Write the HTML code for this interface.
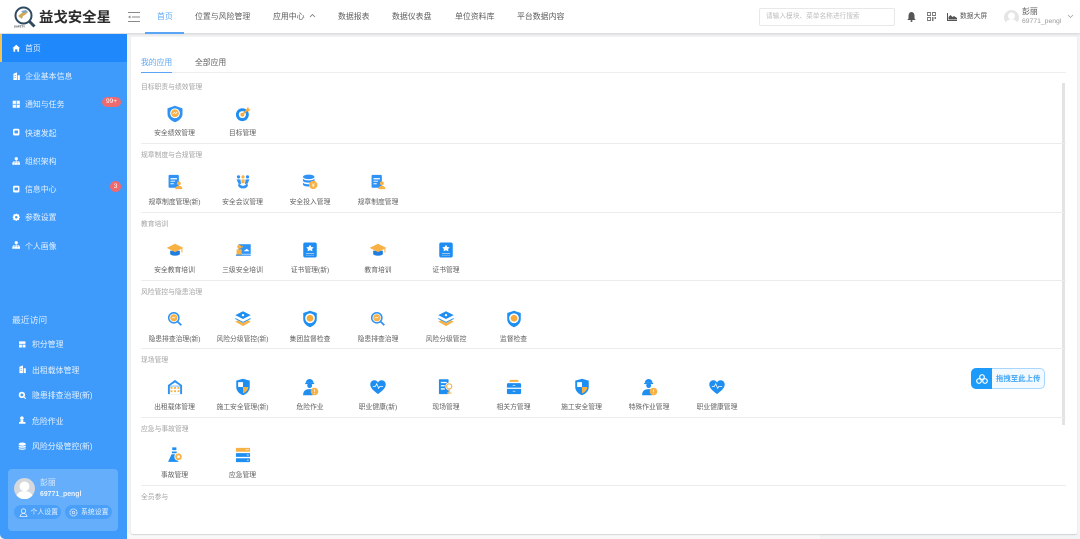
<!DOCTYPE html>
<html lang="zh"><head><meta charset="utf-8"><title>益戈安全星</title>
<style>
*{box-sizing:border-box}
html,body{margin:0;padding:0;width:1080px;height:539px;overflow:hidden;background:#f1f3f5}
body{position:relative;font-family:"Liberation Sans","Noto Sans CJK SC",sans-serif;color:#555}
#wrap{position:absolute;left:0;top:0;width:1080px;height:539px;overflow:hidden;filter:blur(.35px)}
.t{position:absolute;white-space:nowrap;line-height:12px;height:12px}
.a{position:absolute}
#hd{position:absolute;left:0;top:0;width:1080px;height:33px;background:#fff;box-shadow:0 1px 3px rgba(0,0,0,.14)}
.n{font-size:7.9px;color:#5c5c5c;top:10.5px}
#sb{position:absolute;left:0;top:34px;width:127px;height:505px;background:#3f9bfb;border-bottom-left-radius:5px;color:#fff}
.s{font-size:7.9px;color:#e6f2ff;left:25px;margin-top:1px}
.r{font-size:7.9px;color:#e6f2ff;left:32px;margin-top:1px}
#card{position:absolute;left:131px;top:37px;width:946px;height:497px;background:#fff;border-radius:2px;box-shadow:0 1px 1px rgba(0,0,0,.14)}
.h{font-size:6.8px;color:#a3a3a3;left:141px;margin-top:1px}
.l{font-size:6.8px;color:#5f5f5f;transform:translateX(-50%);margin-top:1px}
.d{position:absolute;left:141px;width:925px;height:1px;background:#ececec}
.i{position:absolute;width:18px;height:18px}
.w{position:absolute;width:8.500px;height:8.500px;margin:.75px}
</style></head><body>
<svg width="0" height="0" style="position:absolute">
<defs>
<symbol id="shield" viewBox="0 0 24 24"><path d="M12 1 22 4.500V12C22 18 16 21.500 12 23 8 21.500 2 18 2 12V4.500Z" fill="#2f93f5"/><circle cx="12" cy="11" r="6.500" fill="#fff"/><circle cx="12" cy="11" r="5.200" fill="#f8b144"/><path d="M9 12l2-2 2 1.500 2-2.500" stroke="#fff" fill="none"/></symbol>
<symbol id="target" viewBox="-2 -2 28 28"><circle cx="11" cy="13" r="10" fill="#1f8ef1"/><circle cx="11" cy="13" r="5.500" fill="#fff"/><circle cx="11" cy="13" r="3" fill="#f8a93a"/><path d="M11 13 20 4" stroke="#f8a93a" stroke-width="2.500"/><path d="M18 2h3v3h3l-3 3h-3z" fill="#f8a93a"/></symbol>
<symbol id="docu" viewBox="-2 -2 28 28"><rect x="2" y="1" width="16" height="20" rx="1.500" fill="#2f93f5"/><path d="M5 6h10v2H5zM5 10h7v1.500H5zM5 14h5v1.500H5z" fill="#fff"/><circle cx="18" cy="14" r="3" fill="#f8b144"/><path d="M12.500 23c0-3.500 2.500-5 5.500-5s5.500 1.500 5.500 5z" fill="#f8b144"/></symbol>
<symbol id="meet" viewBox="-2 -2 28 28"><circle cx="5" cy="4" r="2.500" fill="#2f93f5"/><circle cx="12" cy="4" r="2.500" fill="#f8b144"/><circle cx="19" cy="4" r="2.500" fill="#2f93f5"/><path d="M2 8h6l1 7H5zM22 8h-6l-1 7h4z" fill="#2f93f5"/><path d="M9.500 8h5v6h-5z" fill="#f8b144"/><path d="M4 16c1 5 5 6 8 6s7-1 8-6l-3-1c-1 2-3 3-5 3s-4-1-5-3z" fill="#2f93f5"/></symbol>
<symbol id="db" viewBox="-2 -2 28 28"><ellipse cx="10" cy="4" rx="9" ry="3.500" fill="#2f93f5"/><path d="M1 6.500c1 2 4 3 9 3s8-1 9-3v3.500c-1 2-4 3-9 3s-8-1-9-3zM1 12.500c1 2 4 3 9 3h1v3.500h-1c-5 0-8-1-9-3z" fill="#2f93f5"/><circle cx="17" cy="16.500" r="6.500" fill="#f8b144"/><path d="M15 14.500l2 2 2-2M17 16.500v4M15 18h4" stroke="#fff" fill="none"/></symbol>
<symbol id="cap" viewBox="-1 -1 26 26"><path d="M5 13v5c2 3 12 3 14 0v-5z" fill="#1f7fe0"/><path d="M12 3 24 9 12 15 0 9z" fill="#f8b144"/><path d="M22 9.500v6" stroke="#f8b144" stroke-width="1.500"/></symbol>
<symbol id="board" viewBox="-2 -2 28 28"><rect x="5" y="3" width="19" height="15" fill="#2f93f5"/><path d="M13 14 18 10 22 14z" fill="#fff"/><circle cx="6" cy="7" r="3" fill="#f8b144"/><path d="M2 11h8v10H2z" fill="#f8b144"/><path d="M8 9l4-3" stroke="#f8b144" stroke-width="1.500"/><rect x="1" y="19" width="23" height="2" fill="#2f93f5"/></symbol>
<symbol id="cert" viewBox="0 0 24 24"><rect x="3" y="2" width="18" height="20" rx="2.500" fill="#1d8df3"/><path d="M12 5l1.800 3 3.200.5-2.200 2.200.4 3-3.200-1.300-3.200 1.300.4-3L7 8.500l3.200-.5z" fill="#fff"/><rect x="6.500" y="16" width="11" height="1.300" fill="#9dc8ee"/><rect x="6.500" y="18.500" width="11" height="1.300" fill="#6fb0e8"/></symbol>
<symbol id="look" viewBox="-3 -3 30 30"><circle cx="10" cy="10" r="8.500" fill="none" stroke="#2f93f5" stroke-width="2.500"/><circle cx="10" cy="10" r="6" fill="#f8b144"/><path d="M6.500 11l2-2 2 1.500 2.500-2.500" stroke="#fff" fill="none"/><path d="M16 16 22.500 22.500" stroke="#2f93f5" stroke-width="3"/></symbol>
<symbol id="layers" viewBox="-2 -2 28 28"><path d="M12 0 24 6 12 12 0 6z" fill="#1f8ef1"/><path d="M0 10.500 12 16.500 24 10.500 24 12 12 18 0 12z" fill="#1f8ef1"/><path d="M0 16 4 14 12 18.500 20 14 24 16 12 23z" fill="#f8b144"/><circle cx="12" cy="6" r="1.800" fill="#fff"/></symbol>
<symbol id="guard" viewBox="0 0 24 24"><path d="M12 1 21 4V12C21 18 16 21.500 12 23 8 21.500 3 18 3 12V4Z" fill="#1f8ef1"/><circle cx="12" cy="11" r="6.500" fill="#fff"/><circle cx="12" cy="11" r="4.500" fill="#f8a93a"/></symbol>
<symbol id="house" viewBox="-2 -2 28 28"><path d="M1 9 12 1 23 9V23H1z" fill="#2f93f5"/><path d="M4 10 12 5 20 10z" fill="#fff"/><rect x="4" y="11" width="16" height="12" fill="#fff"/><path d="M5 12h3v3H5zM10.500 12h3v3h-3zM16 12h3v3h-3zM5 17h3v3H5zM10.500 17h3v3h-3zM16 17h3v3h-3z" fill="#f8b144"/></symbol>
<symbol id="sh2" viewBox="0 0 24 24"><path d="M12 1 21 3.500V12C21 18 16 21.500 12 23 8 21.500 3 18 3 12V3.500Z" fill="#1f8ef1"/><path d="M5.500 5.500H12V12H5.500z" fill="#fff"/><path d="M12 12h7c0 4-3 7-7 8.500z" fill="#f8b144"/></symbol>
<symbol id="work" viewBox="-1 -1 26 26"><path d="M6 6a5.500 5.500 0 0 1 11 0z" fill="#1f8ef1"/><rect x="5" y="6" width="13" height="1.800" fill="#1f8ef1"/><circle cx="11.500" cy="10" r="3.500" fill="#1f8ef1"/><path d="M2 24c0-6 3-9 9.500-9 2 0 3.500 .3 4.500 1v8z" fill="#1f8ef1"/><circle cx="18.500" cy="18.500" r="5.500" fill="#f8b144"/><path d="M18.500 15.500v3.500M18.500 20.500v1.200" stroke="#fff"/></symbol>
<symbol id="heart" viewBox="-2 -2 28 28"><path d="M12 23C5 18 0 13.500 0 8 0 4 3 1.500 6.500 1.500 9 1.500 11 3 12 5 13 3 15 1.500 17.500 1.500 21 1.500 24 4 24 8 24 13.500 19 18 12 23Z" fill="#1f8ef1"/><path d="M4 11h4l2-4 3 7 2-3h5" stroke="#fff" fill="none" stroke-width="1.200"/></symbol>
<symbol id="dpin" viewBox="-2 -2 28 28"><rect x="1" y="0" width="15" height="23" rx="1" fill="#1f8ef1"/><path d="M4 4h9v2H4zM4 9h6v2H4zM4 14h6v2H4z" fill="#fff"/><circle cx="17" cy="11" r="6" fill="#fff"/><circle cx="17" cy="11" r="4" fill="none" stroke="#f8b144" stroke-width="1.800"/><path d="M17 15v5M13.500 21.500h7" stroke="#f8b144" stroke-width="1.800"/></symbol>
<symbol id="box" viewBox="-2 -2 28 28"><path d="M5 3a2 2 0 0 1 2-2h10a2 2 0 0 1 2 2v1H5z" fill="#f8b144"/><path d="M1 8a2 2 0 0 1 2-2h18a2 2 0 0 1 2 2v5H1zM1 15h22v6a2 2 0 0 1-2 2H3a2 2 0 0 1-2-2z" fill="#1f8ef1"/><path d="M10 9.500h4M10 18.500h4" stroke="#fff"/></symbol>
<symbol id="cone" viewBox="-1 -1 26 26"><path d="M8 1h6v4H8zM7.500 7h7v2.500h-7zM7 11 h7l3 11H2z" fill="#1f8ef1"/><circle cx="17" cy="14.500" r="6" fill="#fff"/><circle cx="17" cy="14.500" r="4.800" fill="#f8b144"/><circle cx="17" cy="14.500" r="2" fill="#fff"/></symbol>
<symbol id="srv" viewBox="-2 -2 28 28"><rect x="1" y="1" width="22" height="6" rx="1" fill="#f8b144"/><rect x="1" y="9" width="22" height="6" rx="1" fill="#1f8ef1"/><rect x="1" y="17" width="22" height="6" rx="1" fill="#1f8ef1"/><path d="M16 4h5M18 12h3M18 20h3" stroke="#fff"/></symbol>
<symbol id="wcard" viewBox="0 0 24 24"><path d="M3 4h18v7H3zM3 13h8v8H3zM13 13h8v8h-8z" fill="#fff"/></symbol>
<symbol id="whome" viewBox="0 0 24 24"><path d="M12 2 23 12h-3v10h-5v-7H9v7H4V12H1z" fill="#fff"/></symbol>
<symbol id="wbld" viewBox="0 0 24 24"><path d="M4 5 14 1V23H4zM16 9h6V23H16z" fill="#fff"/><path d="M7 9h4v2H7zM7 14h4v2H7z" fill="#3f9bfb"/></symbol>
<symbol id="wmsg" viewBox="0 0 24 24"><rect x="3" y="2" width="18" height="19" rx="4" fill="#fff"/><rect x="7" y="7" width="10" height="8" rx="1" fill="#3f9bfb"/></symbol>
<symbol id="wgear" viewBox="0 0 24 24"><path d="M12 1l3 3h5v5l3 3-3 3v5h-5l-3 3-3-3H4v-5l-3-3 3-3V4h5z" fill="#fff"/><circle cx="12" cy="12" r="3.500" fill="#3f9bfb"/></symbol>
<symbol id="wtree" viewBox="0 0 24 24"><circle cx="12" cy="5" r="4.500" fill="#fff"/><rect x="1" y="15" width="7" height="7" fill="#fff"/><rect x="8.500" y="15" width="7" height="7" fill="#fff"/><rect x="16" y="15" width="7" height="7" fill="#fff"/><path d="M4.500 15v-3h15v3M12 9v6" stroke="#fff" fill="none" stroke-width="1.500"/></symbol>
<symbol id="wtabl" viewBox="0 0 24 24"><path d="M2 2h20v20H2z" fill="#fff"/><path d="M2 12h20M12 2v20" stroke="#3f9bfb" stroke-width="2"/></symbol>
<symbol id="wdisc" viewBox="0 0 24 24"><circle cx="11" cy="11" r="9" fill="#fff"/><circle cx="11" cy="11" r="4" fill="#3f9bfb"/><path d="M17 17l5 5" stroke="#fff" stroke-width="3"/></symbol>
<symbol id="wstk" viewBox="0 0 24 24"><ellipse cx="12" cy="6" rx="10" ry="4.500" fill="#fff"/><path d="M2 10c2 3 18 3 20 0v4c-2 3-18 3-20 0zM2 16.500c2 3 18 3 20 0V19c-2 4-18 4-20 0z" fill="#fff"/></symbol>
<symbol id="wper" viewBox="0 0 24 24"><circle cx="11" cy="6" r="5" fill="#fff"/><path d="M7 11h8v6h6v5H3v-5h4z" fill="#fff"/></symbol>
</defs>
</svg>
<div id="wrap">
<div id="hd"></div>
<svg class="a" style="left:13px;top:6px" width="23" height="23" viewBox="0 0 23 23"><circle cx="10.500" cy="9.500" r="8" fill="#fff" stroke="#2f4a60" stroke-width="2"/><path d="M5 10l5-4 5 0-3 3-2 1-1 3z" fill="#cfa95a"/><path d="M8 5l5-1 2 2-5 1z" fill="#7fa6c4"/><path d="M16 15 21.500 20.500" stroke="#2f4a60" stroke-width="3"/><text x="1" y="21.500" font-size="2.800" font-weight="700" fill="#333">SAFETY</text></svg>
<div class="t" style="left:39px;top:8.500px;height:18px;line-height:18px;font-size:14.400px;font-weight:700;color:#2c2c2c">益戈安全星</div>
<svg class="a" style="left:128px;top:12px" width="12" height="10" viewBox="0 0 12 10"><path d="M0 .500h12M4 5h8M0 9.500h12" stroke="#8a8a8a" stroke-width=".9"/><path d="M2.500 3.500 0 5l2.500 1.500z" fill="#8a8a8a"/></svg>
<div class="t n" style="left:157px;color:#5aa6f6">首页</div>
<div class="a" style="left:145px;top:32px;width:39px;height:1.500px;background:#5aa6f6"></div>
<div class="t n" style="left:195px">位置与风险管理</div>
<div class="t n" style="left:273px">应用中心</div>
<svg class="a" style="left:309px;top:13px" width="7" height="5" viewBox="0 0 7 5"><path d="M1 4 3.500 1.500 6 4" fill="none" stroke="#777" stroke-width=".8"/></svg>
<div class="t n" style="left:338px">数据报表</div>
<div class="t n" style="left:392px">数据仪表盘</div>
<div class="t n" style="left:455px">单位资料库</div>
<div class="t n" style="left:517px">平台数据内容</div>
<div class="a" style="left:759px;top:8px;width:136px;height:18px;border:1px solid #e8e8e8;border-radius:2px;background:#fff"></div>
<div class="t" style="left:766px;top:10.500px;font-size:6.700px;color:#bdbdbd">请输入模块、菜单名称进行搜索</div>
<svg class="a" style="left:907px;top:12px" width="9" height="10" viewBox="0 0 9 10"><path d="M4.500 0C2.500 0 1.500 2 1.500 4V6.500L.3 8H8.700L7.500 6.500V4C7.500 2 6.500 0 4.500 0Z" fill="#555"/><circle cx="4.500" cy="9" r="1" fill="#555"/></svg>
<svg class="a" style="left:927px;top:12px" width="9" height="9" viewBox="0 0 9 9"><path d="M.5.500h3v3h-3zM5.500.500h3v3h-3zM.5 5.500h3v3h-3z" fill="none" stroke="#777" stroke-width=".9"/><path d="M5 5h1.500v4H5zM7.500 5H9v2H7.500z" fill="#777"/></svg>
<svg class="a" style="left:947px;top:13px" width="10" height="8" viewBox="0 0 10 8"><path d="M0 0v8h10V7H1V0z" fill="#555"/><path d="M1.500 6.500V4L3.500 2l2 2 1.500-1 3 2v1.500z" fill="#555"/></svg>
<div class="t" style="left:960px;top:10.500px;font-size:6.800px;color:#555">数据大屏</div>
<svg class="a" style="left:1004px;top:10px" width="15" height="15" viewBox="0 0 15 15"><circle cx="7.500" cy="7.500" r="7.500" fill="#e5e5e5"/><circle cx="7.500" cy="6" r="3.500" fill="#fff"/><path d="M1.800 12.500C3 10 5 9.500 7.500 9.500s4.500.5 5.700 3a7.500 7.500 0 0 1-11.400 0z" fill="#fff"/></svg>
<div class="t" style="left:1022px;top:6px;font-size:7.900px;color:#555">彭丽</div>
<div class="t" style="left:1022px;top:16px;font-size:6.800px;color:#9a9a9a">69771_pengl</div>
<svg class="a" style="left:1067px;top:14px" width="7" height="5" viewBox="0 0 7 5"><path d="M1 1 3.500 3.500 6 1" fill="none" stroke="#999" stroke-width=".7"/></svg>

<div id="sb"></div>
<div class="a" style="left:0;top:34px;width:127px;height:28px;background:#1f88fb"></div>
<div class="a" style="left:0;top:34px;width:1.500px;height:28px;background:#f4c452"></div>
<svg class="w" style="left:11px;top:43px"><use href="#whome"/></svg><div class="t s" style="top:42px">首页</div>
<svg class="w" style="left:11px;top:71px"><use href="#wbld"/></svg><div class="t s" style="top:70px">企业基本信息</div>
<svg class="w" style="left:11px;top:99px"><use href="#wtabl"/></svg><div class="t s" style="top:98px">通知与任务</div>
<div class="t" style="left:102px;top:96.500px;width:19px;height:10px;line-height:10px;border-radius:5px;background:#ee6a6e;color:#fff;font-size:6.500px;text-align:center">99+</div>
<svg class="w" style="left:11px;top:127.500px"><use href="#wmsg"/></svg><div class="t s" style="top:126.500px">快速发起</div>
<svg class="w" style="left:11px;top:156px"><use href="#wtree"/></svg><div class="t s" style="top:155px">组织架构</div>
<svg class="w" style="left:11px;top:184px"><use href="#wmsg"/></svg><div class="t s" style="top:183px">信息中心</div>
<div class="t" style="left:110px;top:181px;width:11px;height:11px;line-height:11px;border-radius:50%;background:#ee6a6e;color:#fff;font-size:6.500px;text-align:center">3</div>
<svg class="w" style="left:11px;top:212px"><use href="#wgear"/></svg><div class="t s" style="top:211px">参数设置</div>
<svg class="w" style="left:11px;top:240.500px"><use href="#wtree"/></svg><div class="t s" style="top:239.500px">个人画像</div>
<div class="t" style="left:12px;top:313.500px;font-size:8.800px;color:#dcecff">最近访问</div>
<svg class="w" style="left:17px;top:339px"><use href="#wcard"/></svg><div class="t r" style="top:338px">积分管理</div>
<svg class="w" style="left:17px;top:364.500px"><use href="#wbld"/></svg><div class="t r" style="top:363.500px">出租载体管理</div>
<svg class="w" style="left:17px;top:390px"><use href="#wdisc"/></svg><div class="t r" style="top:389px">隐患排查治理(新)</div>
<svg class="w" style="left:17px;top:415.500px"><use href="#wper"/></svg><div class="t r" style="top:414.500px">危险作业</div>
<svg class="w" style="left:17px;top:441px"><use href="#wstk"/></svg><div class="t r" style="top:440px">风险分级管控(新)</div>
<div class="a" style="left:8px;top:469px;width:110px;height:62px;border-radius:4px;background:#65aefb"></div>
<svg class="a" style="left:14px;top:477.500px" width="21" height="21" viewBox="0 0 15 15"><circle cx="7.500" cy="7.500" r="7.500" fill="#d5d8dc"/><circle cx="7.500" cy="6" r="3.500" fill="#fff"/><path d="M1.800 12.500C3 10 5 9.500 7.500 9.500s4.500.5 5.700 3a7.500 7.500 0 0 1-11.400 0z" fill="#fff"/></svg>
<div class="t" style="left:40px;top:477px;font-size:7.900px;color:#dcecff">彭丽</div>
<div class="t" style="left:40px;top:489px;font-size:6.900px;font-weight:700;color:#e8f3ff">69771_pengl</div>
<div class="a" style="left:14px;top:505px;width:47px;height:14px;border-radius:7px;background:#4aa0f8"></div>
<div class="a" style="left:65px;top:505px;width:47px;height:14px;border-radius:7px;background:#4aa0f8"></div>
<svg class="a" style="left:18.500px;top:507.500px" width="9" height="9" viewBox="0 0 9 9"><circle cx="4.500" cy="3" r="2.200" fill="none" stroke="#e6f2ff" stroke-width=".8"/><path d="M1 8.500c.5-2 2-3 3.500-3s3 1 3.500 3z" fill="none" stroke="#e6f2ff" stroke-width=".8"/></svg>
<div class="t" style="left:30.500px;top:507px;font-size:6.900px;color:#e6f2ff">个人设置</div>
<svg class="a" style="left:69px;top:507.500px" width="9" height="9" viewBox="0 0 9 9"><circle cx="4.500" cy="4.500" r="1.300" fill="none" stroke="#e6f2ff" stroke-width=".7"/><circle cx="4.500" cy="4.500" r="3.500" fill="none" stroke="#e6f2ff" stroke-width=".9" stroke-dasharray="1.400 .5"/></svg>
<div class="t" style="left:81px;top:507px;font-size:6.900px;color:#e6f2ff">系统设置</div>

<div class="a" style="left:127px;top:534px;width:693px;height:5px;background:#f8f8f8"></div>
<div id="card"></div>
<div class="t" style="left:141px;top:56.500px;font-size:7.800px;color:#5aa6f6">我的应用</div>
<div class="t" style="left:195px;top:56.500px;font-size:7.800px;color:#5c5c5c">全部应用</div>
<div class="a" style="left:141px;top:72px;width:925px;height:1px;background:#eee"></div>
<div class="a" style="left:141px;top:71.500px;width:31px;height:1.500px;background:#5aa6f6"></div>
<div class="a" style="left:1062px;top:83px;width:3px;height:342px;background:#e3e3e3"></div>

<div class="t h" style="top:81px">目标职责与绩效管理</div>
<svg class="i" style="left:165.500px;top:104.500px"><use href="#shield"/></svg><div class="t l" style="left:174.500px;top:127px">安全绩效管理</div>
<svg class="i" style="left:233.500px;top:104.500px"><use href="#target"/></svg><div class="t l" style="left:242.500px;top:127px">目标管理</div>
<div class="d" style="top:143px"></div>

<div class="t h" style="top:149px">规章制度与合规管理</div>
<svg class="i" style="left:165.500px;top:172.500px"><use href="#docu"/></svg><div class="t l" style="left:174.500px;top:195.500px">规章制度管理(新)</div>
<svg class="i" style="left:233.500px;top:172.500px"><use href="#meet"/></svg><div class="t l" style="left:242.500px;top:195.500px">安全会议管理</div>
<svg class="i" style="left:301px;top:172.500px"><use href="#db"/></svg><div class="t l" style="left:310px;top:195.500px">安全投入管理</div>
<svg class="i" style="left:369px;top:172.500px"><use href="#docu"/></svg><div class="t l" style="left:378px;top:195.500px">规章制度管理</div>
<div class="d" style="top:212px"></div>

<div class="t h" style="top:217.500px">教育培训</div>
<svg class="i" style="left:165.500px;top:241px"><use href="#cap"/></svg><div class="t l" style="left:174.500px;top:264px">安全教育培训</div>
<svg class="i" style="left:233.500px;top:241px"><use href="#board"/></svg><div class="t l" style="left:242.500px;top:264px">三级安全培训</div>
<svg class="i" style="left:301px;top:241px"><use href="#cert"/></svg><div class="t l" style="left:310px;top:264px">证书管理(新)</div>
<svg class="i" style="left:369px;top:241px"><use href="#cap"/></svg><div class="t l" style="left:378px;top:264px">教育培训</div>
<svg class="i" style="left:437px;top:241px"><use href="#cert"/></svg><div class="t l" style="left:446px;top:264px">证书管理</div>
<div class="d" style="top:280px"></div>

<div class="t h" style="top:286px">风险管控与隐患治理</div>
<svg class="i" style="left:165.500px;top:310px"><use href="#look"/></svg><div class="t l" style="left:174.500px;top:332.500px">隐患排查治理(新)</div>
<svg class="i" style="left:233.500px;top:310px"><use href="#layers"/></svg><div class="t l" style="left:242.500px;top:332.500px">风险分级管控(新)</div>
<svg class="i" style="left:301px;top:310px"><use href="#guard"/></svg><div class="t l" style="left:310px;top:332.500px">集团监督检查</div>
<svg class="i" style="left:369px;top:310px"><use href="#look"/></svg><div class="t l" style="left:378px;top:332.500px">隐患排查治理</div>
<svg class="i" style="left:437px;top:310px"><use href="#layers"/></svg><div class="t l" style="left:446px;top:332.500px">风险分级管控</div>
<svg class="i" style="left:504.500px;top:310px"><use href="#guard"/></svg><div class="t l" style="left:513.500px;top:332.500px">监督检查</div>
<div class="d" style="top:348px"></div>

<div class="t h" style="top:354px">现场管理</div>
<svg class="i" style="left:165.500px;top:378px"><use href="#house"/></svg><div class="t l" style="left:174.500px;top:400.500px">出租载体管理</div>
<svg class="i" style="left:233.500px;top:378px"><use href="#sh2"/></svg><div class="t l" style="left:242.500px;top:400.500px">施工安全管理(新)</div>
<svg class="i" style="left:301px;top:378px"><use href="#work"/></svg><div class="t l" style="left:310px;top:400.500px">危险作业</div>
<svg class="i" style="left:369px;top:378px"><use href="#heart"/></svg><div class="t l" style="left:378px;top:400.500px">职业健康(新)</div>
<svg class="i" style="left:437px;top:378px"><use href="#dpin"/></svg><div class="t l" style="left:446px;top:400.500px">现场管理</div>
<svg class="i" style="left:504.500px;top:378px"><use href="#box"/></svg><div class="t l" style="left:513.500px;top:400.500px">相关方管理</div>
<svg class="i" style="left:572.500px;top:378px"><use href="#sh2"/></svg><div class="t l" style="left:581.500px;top:400.500px">施工安全管理</div>
<svg class="i" style="left:640px;top:378px"><use href="#work"/></svg><div class="t l" style="left:649px;top:400.500px">特殊作业管理</div>
<svg class="i" style="left:708px;top:378px"><use href="#heart"/></svg><div class="t l" style="left:717px;top:400.500px">职业健康管理</div>
<div class="d" style="top:417px"></div>

<div class="t h" style="top:422.500px">应急与事故管理</div>
<svg class="i" style="left:165.500px;top:446px"><use href="#cone"/></svg><div class="t l" style="left:174.500px;top:469px">事故管理</div>
<svg class="i" style="left:233.500px;top:446px"><use href="#srv"/></svg><div class="t l" style="left:242.500px;top:469px">应急管理</div>
<div class="d" style="top:485px"></div>

<div class="t h" style="top:491px">全员参与</div>

<div class="a" style="left:971px;top:368px;width:74px;height:21px;border:1px solid #a8d6ff;border-radius:5px;background:#f2f9ff"></div>
<div class="a" style="left:971px;top:368px;width:21px;height:21px;border-radius:5px 0 0 5px;background:#1d9bfb"></div>
<svg class="a" style="left:975.500px;top:372.500px" width="12" height="12" viewBox="0 0 12 12"><circle cx="6" cy="4" r="2.300" fill="none" stroke="#fff" stroke-width="1.200"/><circle cx="3" cy="8" r="2.300" fill="none" stroke="#fff" stroke-width="1.200"/><circle cx="9" cy="8" r="2.300" fill="none" stroke="#fff" stroke-width="1.200"/></svg>
<div class="t" style="left:996px;top:372.500px;font-size:7.400px;font-weight:700;color:#45a8f5">拖拽至此上传</div>
</div>
</body></html>
